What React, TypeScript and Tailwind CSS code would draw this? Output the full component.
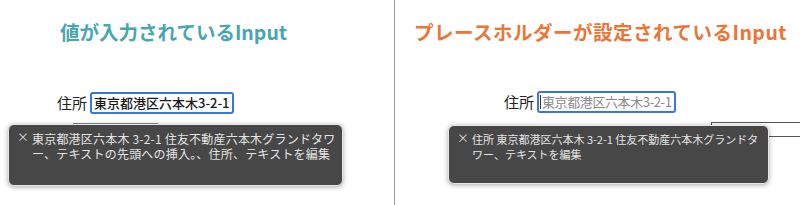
import React from "react";

const jp = { fontFamily: '"Noto Sans CJK JP", "Noto Sans", sans-serif' };

function Tip({ lines, className, textClass }: { lines: string[]; className: string; textClass: string }) {
  return (
    <div
      className={`absolute rounded-[6px] border border-[#e6e6e6] bg-[#474747] shadow-[0_1px_5px_rgba(0,0,0,0.35)] ${className}`}
    >
      <div className="flex pl-[8px] pt-[6px]">
        <span className="mr-[3px] mt-[-1px] text-[12px] leading-[14px] text-[#d6d6d6]">×</span>
        <div className={`leading-[15px] text-[#e4e4e4] ${textClass}`}>
          {lines.map((l, i) => (
            <div key={i} className="whitespace-nowrap">
              {l}
            </div>
          ))}
        </div>
      </div>
    </div>
  );
}

export default function App() {
  return (
    <div className="flex h-[205px] w-[800px] overflow-hidden bg-white" style={jp}>
      <div className="relative h-full w-[394px]">
        <div className="pl-[60px] pt-[20px] text-[19.5px] font-bold leading-[24px] text-[#48a6ae]">
          値が入力されているInput
        </div>
        <div className="mt-[48px] flex items-center pl-[57px]">
          <span className="text-[15px] leading-[20px] text-[#222]">住所</span>
          <div className="ml-[3px] flex h-[22px] w-[144px] items-center overflow-hidden whitespace-nowrap rounded-[3px] border-2 border-[#3a78d8] pl-[2px] text-[13px] font-medium text-[#1a1a1a]">
            東京都港区六本木3-2-1
          </div>
        </div>
        <div className="ml-[73px] mt-[9px] h-px w-[85px] bg-[#8a8a8a]" />
        <Tip
          className="left-[8px] top-[124px] h-[62px] w-[335px]"
          textClass="text-[12px] tracking-[0.2px]"
          lines={[
            "東京都港区六本木 3-2-1 住友不動産六本木グランドタワ",
            "ー、テキストの先頭への挿入。、住所、テキストを編集",
          ]}
        />
      </div>
      <div className="h-full w-px bg-[#9c9c9c]" />
      <div className="relative h-full flex-1">
        <div className="pl-[19px] pt-[20px] text-[19.5px] font-bold leading-[24px] tracking-[0.5px] text-[#ec7536]">
          プレースホルダーが設定されているInput
        </div>
        <div className="mt-[47px] flex items-center pl-[109px]">
          <span className="text-[15px] leading-[20px] text-[#222]">住所</span>
          <div className="ml-[3px] flex h-[22px] w-[139px] items-center overflow-hidden whitespace-nowrap rounded-[3px] border-2 border-[#3a78d8] pl-[1px] text-[13px] tracking-[-0.4px] text-[#8a8a8a]">
            <span className="mr-[1px] h-[14px] w-px shrink-0 bg-[#333]" />
            東京都港区六本木3-2-1
          </div>
        </div>
        <div className="ml-[316px] mt-[9px] h-[15px] border-b border-l border-t border-[#555]" />
        <Tip
          className="left-[53px] top-[125px] h-[59px] w-[321px]"
          textClass="text-[11px]"
          lines={[
            "住所 東京都港区六本木 3-2-1 住友不動産六本木グランドタ",
            "ワー、テキストを編集",
          ]}
        />
      </div>
    </div>
  );
}
